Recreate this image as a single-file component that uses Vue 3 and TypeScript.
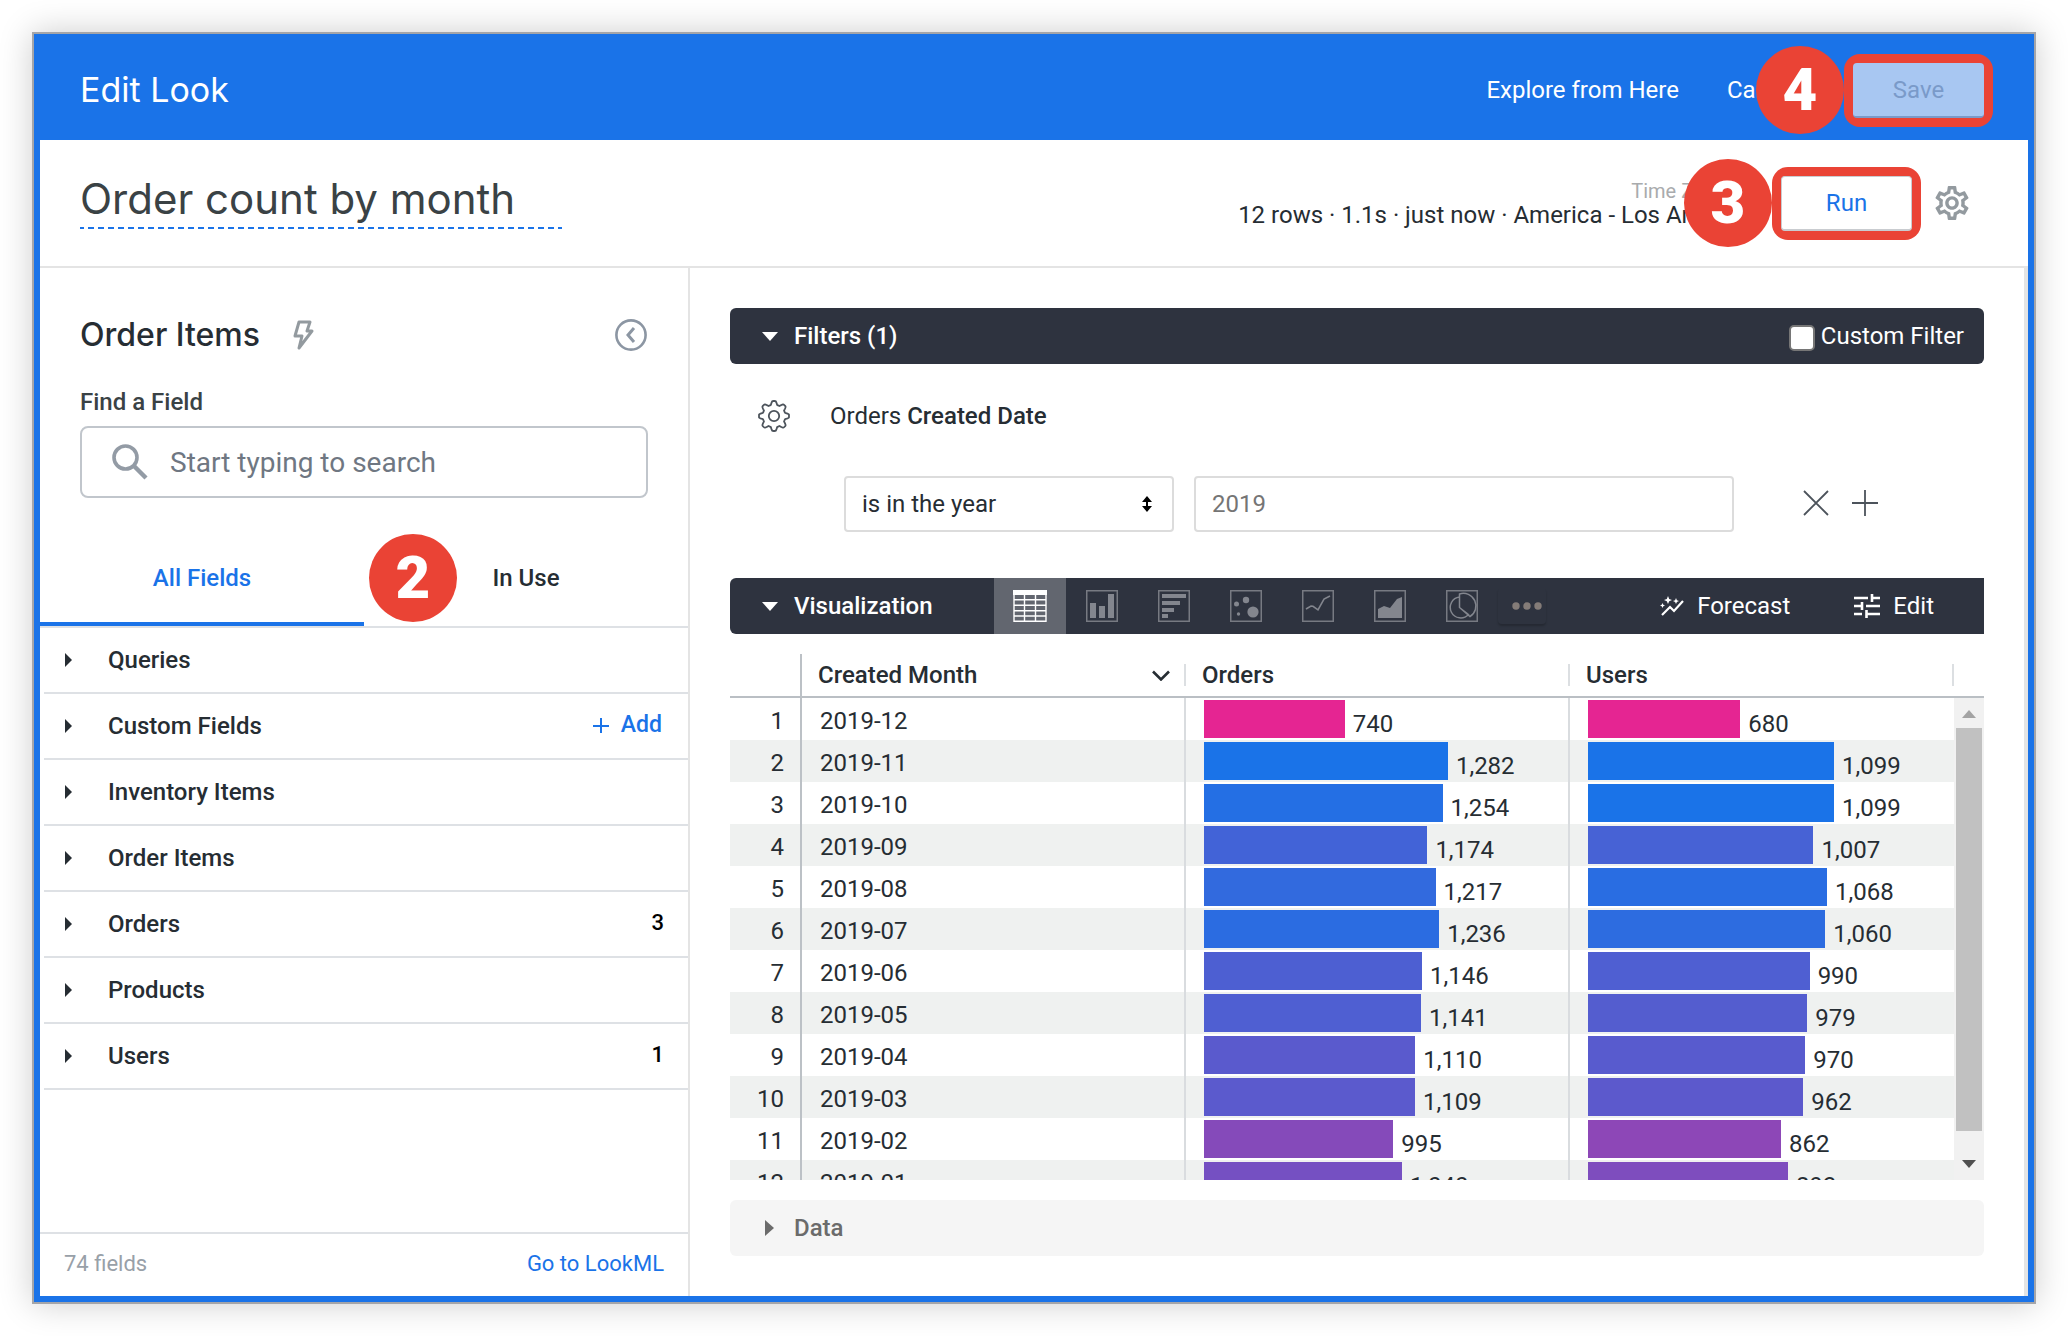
<script setup lang="ts">
import { ref } from 'vue'

interface FieldGroup {
  name: string
  count?: number
  addable?: boolean
}

interface ResultRow {
  month: string
  orders: number
  users: number
}

type Measure = 'orders' | 'users'

const lookTitle = ref('Order count by month')
const fieldSearch = ref('')
const operator = ref('year')
const filterValue = ref('')
const customFilter = ref(false)

const groups: FieldGroup[] = [
  { name: 'Queries' },
  { name: 'Custom Fields', addable: true },
  { name: 'Inventory Items' },
  { name: 'Order Items' },
  { name: 'Orders', count: 3 },
  { name: 'Products' },
  { name: 'Users', count: 1 },
]

const results: ResultRow[] = [
  { month: '2019-12', orders: 740, users: 680 },
  { month: '2019-11', orders: 1282, users: 1099 },
  { month: '2019-10', orders: 1254, users: 1099 },
  { month: '2019-09', orders: 1174, users: 1007 },
  { month: '2019-08', orders: 1217, users: 1068 },
  { month: '2019-07', orders: 1236, users: 1060 },
  { month: '2019-06', orders: 1146, users: 990 },
  { month: '2019-05', orders: 1141, users: 979 },
  { month: '2019-04', orders: 1110, users: 970 },
  { month: '2019-03', orders: 1109, users: 962 },
  { month: '2019-02', orders: 995, users: 862 },
  { month: '2019-01', orders: 1040, users: 893 },
]

const measures: Measure[] = ['orders', 'users']
const lowColor = [229, 37, 146]
const highColor = [26, 115, 232]
const fullBar: Record<Measure, number> = { orders: 70.5, users: 70.7 }

// Bars grow from zero; their colour runs from the column's minimum to its maximum.
function barStyle(row: ResultRow, key: Measure) {
  const values = results.map((r) => r[key])
  const min = Math.min(...values)
  const max = Math.max(...values)
  const t = (row[key] - min) / (max - min)
  const rgb = lowColor.map((c, i) => Math.round(c + (highColor[i] - c) * t))
  return {
    width: `${(row[key] / max) * fullBar[key]}%`,
    backgroundColor: `rgb(${rgb.join(', ')})`,
  }
}

function format(value: number): string {
  return value.toLocaleString('en-US')
}

// Outline of the eight-lobed cog beside a filter.
function cogPath(): string {
  const points: string[] = []
  for (let i = 0; i < 180; i++) {
    const a = (i / 180) * Math.PI * 2
    const wave = Math.max(-1, Math.min(1, Math.cos(a * 8) * 1.5))
    const r = 13.2 + wave * 1.8
    points.push(`${(16 + r * Math.sin(a)).toFixed(2)} ${(16 - r * Math.cos(a)).toFixed(2)}`)
  }
  return `M${points.join('L')}Z`
}
const cog = cogPath()
</script>

<template>
  <div class="window">
    <header class="topbar">
      <h1>Edit Look</h1>
      <nav class="actions" aria-label="Look actions">
        <a href="#explore">Explore from Here</a>
        <a href="#cancel">Cancel</a>
        <div class="callout">
          <span class="step step-before">4</span>
          <button class="btn btn-save" type="button" disabled>Save</button>
        </div>
      </nav>
    </header>

    <section class="titlebar">
      <input v-model="lookTitle" class="look-title" type="text" aria-label="Look title" />
      <div class="run">
        <div class="meta">
          <div class="zone">Time Zone</div>
          <div>12 rows · 1.1s · just now · America - Los Angeles</div>
        </div>
        <div class="callout">
          <span class="step step-before">3</span>
          <button class="btn btn-run" type="button">Run</button>
        </div>
        <button class="icon-btn" type="button" aria-label="Settings">
          <svg width="34" height="34" viewBox="2 2 20 20" fill="#939a9f">
            <path d="M19.43 12.98c.04-.32.07-.64.07-.98 0-.34-.03-.66-.07-.98l2.11-1.65c.19-.15.24-.42.12-.64l-2-3.46c-.09-.16-.26-.25-.44-.25-.06 0-.12.01-.17.03l-2.49 1c-.52-.4-1.08-.73-1.69-.98l-.38-2.65C14.46 2.18 14.25 2 14 2h-4c-.25 0-.46.18-.49.42l-.38 2.65c-.61.25-1.17.59-1.69.98l-2.49-1c-.06-.02-.12-.03-.18-.03-.17 0-.34.09-.43.25l-2 3.46c-.13.22-.07.49.12.64l2.11 1.65c-.04.32-.07.65-.07.98 0 .33.03.66.07.98l-2.11 1.65c-.19.15-.24.42-.12.64l2 3.46c.09.16.26.25.44.25.06 0 .12-.01.17-.03l2.49-1c.52.4 1.08.73 1.69.98l.38 2.65c.03.24.24.42.49.42h4c.25 0 .46-.18.49-.42l.38-2.65c.61-.25 1.17-.59 1.69-.98l2.49 1c.06.02.12.03.18.03.17 0 .34-.09.43-.25l2-3.46c.12-.22.07-.49-.12-.64l-2.11-1.65zm-1.98-1.71c.04.31.05.52.05.73 0 .21-.02.43-.05.73l-.14 1.13.89.7 1.08.84-.7 1.21-1.27-.51-1.04-.42-.9.68c-.43.32-.84.56-1.25.73l-1.06.43-.16 1.13-.2 1.35h-1.4l-.19-1.35-.16-1.13-1.06-.43c-.43-.18-.83-.41-1.23-.71l-.91-.7-1.06.43-1.27.51-.7-1.21 1.08-.84.89-.7-.14-1.13c-.03-.31-.05-.54-.05-.74s.02-.43.05-.73l.14-1.13-.89-.7-1.08-.84.7-1.21 1.27.51 1.04.42.9-.68c.43-.32.84-.56 1.25-.73l1.06-.43.16-1.13.2-1.35h1.39l.19 1.35.16 1.13 1.06.43c.43.18.83.41 1.23.71l.91.7 1.06-.43 1.27-.51.7 1.21-1.07.85-.89.7.14 1.13zM12 8c-2.21 0-4 1.79-4 4s1.79 4 4 4 4-1.79 4-4-1.79-4-4-4zm0 6c-1.1 0-2-.9-2-2s.9-2 2-2 2 .9 2 2-.9 2-2 2z" />
          </svg>
        </button>
      </div>
    </section>

    <div class="body">
      <aside class="sidebar">
        <div class="explore">
          <h2>Order Items</h2>
          <svg width="22" height="32" viewBox="0 0 22 32" fill="none" stroke="#939a9f" stroke-width="3" stroke-linejoin="round">
            <path d="M7 3h11l-3 9h5L7 29l3-12H3z" />
          </svg>
          <button class="icon-btn collapse" type="button" aria-label="Collapse field picker">
            <svg width="32" height="32" viewBox="0 0 32 32" fill="none" stroke="#8c96a3">
              <circle cx="16" cy="16" r="14.600" stroke-width="2.600" />
              <path d="M19 9l-6 7 6 7" stroke-width="3" />
            </svg>
          </button>
        </div>

        <div class="finder">
          <label for="field-search">Find a Field</label>
          <div class="search">
            <svg width="36" height="36" viewBox="0 0 36 36" fill="none" stroke="#939ba5">
              <circle cx="13.500" cy="13.500" r="11.500" stroke-width="3.600" />
              <path d="M22 22l12 12" stroke-width="4.400" />
            </svg>
            <input id="field-search" v-model="fieldSearch" type="text" placeholder="Start typing to search" />
          </div>
        </div>

        <div class="tabs" role="tablist">
          <button class="tab active" type="button" role="tab" aria-selected="true">All Fields</button>
          <button class="tab" type="button" role="tab" aria-selected="false">In Use</button>
          <span class="step step-tabs">2</span>
        </div>

        <ul class="groups">
          <li v-for="group in groups" :key="group.name">
            <button class="group" type="button" aria-expanded="false">
              <svg width="7" height="14" viewBox="0 0 7 14" fill="#262d33"><path d="M0 0l7 7-7 7z" /></svg>
              {{ group.name }}
            </button>
            <button v-if="group.addable" class="add" type="button">
              <svg width="16" height="16" viewBox="0 0 16 16" stroke="#1a73e8" stroke-width="2"><path d="M8 1v15M0 9h16" /></svg>
              Add
            </button>
            <span v-if="group.count" class="count">{{ group.count }}</span>
          </li>
        </ul>

        <footer class="side-foot">
          <span>74 fields</span>
          <a href="#lookml">Go to LookML</a>
        </footer>
      </aside>

      <main class="main">
        <div class="bar">
          <button class="bar-toggle" type="button" aria-expanded="true">
            <svg class="caret" width="16" height="9" viewBox="0 0 16 9" fill="#fff"><path d="M0 0h16L8 9z" /></svg>
            Filters (1)
          </button>
          <label class="custom"><input v-model="customFilter" type="checkbox" />Custom Filter</label>
        </div>

        <section class="filters">
          <div class="filter-name">
            <button class="icon-btn" type="button" aria-label="Filter settings">
              <svg width="32" height="32" viewBox="0 0 32 32" fill="none" stroke="#4c535b" stroke-width="1.800">
                <path :d="cog" />
                <circle cx="16" cy="16" r="5.200" />
              </svg>
            </button>
            <span>Orders <b>Created Date</b></span>
          </div>
          <div class="filter-row">
            <div class="select">
              <select v-model="operator" aria-label="Condition">
                <option value="year">is in the year</option>
              </select>
              <svg width="10" height="16" viewBox="0 0 10 16"><path d="M5 0l5 6H6v4h4l-5 6-5-6h4V6H0z" /></svg>
            </div>
            <input v-model="filterValue" class="value" type="text" placeholder="2019" aria-label="Year" />
            <div class="filter-tools">
              <button class="icon-btn" type="button" aria-label="Remove condition">
                <svg width="26" height="26" viewBox="0 0 26 26" stroke="#4c535b" stroke-width="1.800"><path d="M1 1l24 24M25 1L1 25" /></svg>
              </button>
              <button class="icon-btn" type="button" aria-label="Add condition">
                <svg width="26" height="26" viewBox="0 0 26 26" stroke="#4c535b" stroke-width="1.800"><path d="M13 0v26M0 13h26" /></svg>
              </button>
            </div>
          </div>
        </section>

        <div class="bar bar-viz">
          <button class="bar-toggle" type="button" aria-expanded="true">
            <svg class="caret" width="16" height="9" viewBox="0 0 16 9" fill="#fff"><path d="M0 0h16L8 9z" /></svg>
            Visualization
          </button>
          <div class="kinds">
            <button class="kind selected" type="button" aria-label="Table">
              <svg width="34" height="32" viewBox="0 0 34 32" fill="none" stroke="#fff" stroke-width="1.400">
                <path d="M0 0h34v5H0z" fill="#fff" stroke="none" />
                <path d="M1 4v27.300h32V4M1 9.800h32M1 15.200h32M1 20.800h32M1 26h32M11.500 4v27M22.500 4v27" />
              </svg>
            </button>
            <button class="kind" type="button" aria-label="Column">
              <svg width="32" height="32" viewBox="0 0 32 32" fill="#83868e">
                <rect class="frame" x=".75" y=".75" width="30.500" height="30.500" />
                <path d="M4 13h6v15H4zM13 16h6v12h-6zM22 4h6v24h-6z" />
              </svg>
            </button>
            <button class="kind" type="button" aria-label="Bar">
              <svg width="32" height="32" viewBox="0 0 32 32" fill="#83868e">
                <rect class="frame" x=".75" y=".75" width="30.500" height="30.500" />
                <path d="M4 4h24v4H4zM4 11h18v4H4zM4 18h12v4H4zM4 24h6v4H4z" />
              </svg>
            </button>
            <button class="kind" type="button" aria-label="Scatter">
              <svg width="32" height="32" viewBox="0 0 32 32" fill="#83868e">
                <rect class="frame" x=".75" y=".75" width="30.500" height="30.500" />
                <circle cx="6.500" cy="14" r="2.500" /><circle cx="16" cy="10" r="3.200" />
                <circle cx="8.500" cy="24" r="1.700" /><circle cx="23" cy="22" r="5.600" />
              </svg>
            </button>
            <button class="kind" type="button" aria-label="Line">
              <svg width="32" height="32" viewBox="0 0 32 32" fill="none">
                <rect class="frame" x=".75" y=".75" width="30.500" height="30.500" />
                <path d="M4 19l5-3 2 .3 5 3.500L22 9l6-3" stroke="#83868e" stroke-width="1.600" />
              </svg>
            </button>
            <button class="kind" type="button" aria-label="Area">
              <svg width="32" height="32" viewBox="0 0 32 32" fill="#83868e">
                <rect class="frame" x=".75" y=".75" width="30.500" height="30.500" />
                <path d="M4 28V19l6-3 6 2 7-9 5-2v21z" />
              </svg>
            </button>
            <button class="kind" type="button" aria-label="Pie">
              <svg width="32" height="32" viewBox="0 0 32 32" fill="none">
                <rect class="frame" x=".75" y=".75" width="30.500" height="30.500" />
                <path d="M13.500 7A10.500 10.500 0 1 0 22.500 24.500L13.500 17.500zM13.500 4v13.500L24 26.500A12.500 12.500 0 0 0 13.500 4z" stroke="#83868e" stroke-width="1.500" />
              </svg>
            </button>
            <button class="more" type="button" aria-label="More">
              <svg width="30" height="8" viewBox="0 0 30 8" fill="#847c78">
                <circle cx="4" cy="4" r="3.700" /><circle cx="15" cy="4" r="3.700" /><circle cx="26" cy="4" r="3.700" />
              </svg>
            </button>
          </div>
          <div class="viz-tools">
            <button class="tool" type="button">
              <svg width="24" height="20" viewBox="0 0 24 20" fill="#fff">
                <path d="M2 19l8-8 4 4L23 5" fill="none" stroke="#fff" stroke-width="2.200" />
                <path d="M8 0l1.200 3L12 4 9.200 5.200 8 8 6.800 5.200 4 4l2.800-1zM16 2l.9 2.200L19 5l-2.100.9L16 8l-.9-2.100L13 5l2.100-.8zM2.500 7l.8 1.800 1.700.7-1.700.7-.8 1.800-.8-1.800L0 9.500l1.700-.7z" />
              </svg>
              Forecast
            </button>
            <button class="tool" type="button">
              <svg width="26" height="24" viewBox="0 0 26 24" fill="none" stroke="#fff" stroke-width="2.600">
                <path d="M0 4h14M18 4h8M18 0v8M0 12h8M12 12h14M8 8v8M0 20h8M12 20h14M12.500 16v8" />
              </svg>
              Edit
            </button>
          </div>
        </div>

        <div class="results">
          <div class="viewport">
            <table>
              <thead>
                <tr>
                  <th class="num" aria-label="Row"></th>
                  <th>
                    <div class="head">
                      Created Month
                      <svg width="18" height="11" viewBox="0 0 18 11" fill="none" stroke="#262d33" stroke-width="2.600"><path d="M1 1.500l8 8 8-8" /></svg>
                    </div>
                  </th>
                  <th><div class="head">Orders</div></th>
                  <th><div class="head">Users</div></th>
                </tr>
              </thead>
              <tbody>
                <tr v-for="(row, index) in results" :key="row.month">
                  <td class="num">{{ index + 1 }}</td>
                  <td class="month">{{ row.month }}</td>
                  <td v-for="key in measures" :key="key">
                    <div class="cell">
                      <div class="fill" :style="barStyle(row, key)"></div>
                      <span>{{ format(row[key]) }}</span>
                    </div>
                  </td>
                </tr>
              </tbody>
            </table>
          </div>
          <div class="scroll">
            <div class="track">
              <svg width="14" height="8" viewBox="0 0 14 8" fill="#a3a3a3"><path d="M0 8l7-8 7 8z" /></svg>
              <div class="thumb"></div>
              <svg width="14" height="8" viewBox="0 0 14 8" fill="#505050"><path d="M0 0l7 8 7-8z" /></svg>
            </div>
          </div>
        </div>

        <div class="bar bar-data">
          <button class="bar-toggle" type="button" aria-expanded="false">
            <svg class="caret" width="9" height="16" viewBox="0 0 9 16" fill="#6b6b6b"><path d="M0 0l9 8-9 8z" /></svg>
            Data
          </button>
        </div>
      </main>
    </div>
  </div>
</template>

<style>
body {
  margin: 0;
  background: #fff;
}
</style>

<style scoped>
* {
  box-sizing: border-box;
}

.window {
  display: flex;
  flex-direction: column;
  height: calc(100vh - 64px);
  min-height: 1000px;
  margin: 32px;
  border: 2px solid #a4a5a9;
  outline: 6px solid #1a73e8;
  outline-offset: -8px;
  padding: 6px;
  background: #fff;
  box-shadow: 0 0 32px rgba(0, 0, 0, 0.2);
  color: #262d33;
  font: 24px/32px Roboto, sans-serif;
}

button,
input,
select {
  font: inherit;
  color: inherit;
}

button {
  display: flex;
  align-items: center;
  padding: 0;
  border: 0;
  background: none;
}

svg {
  flex: none;
  display: block;
}

a {
  color: #1a73e8;
  text-decoration: none;
}

h1,
h2 {
  margin: 0;
  font-family: Inter, sans-serif;
}

/* Header */
.topbar {
  display: flex;
  align-items: center;
  justify-content: space-between;
  flex: none;
  height: 100px;
  padding: 0 35px 0 40px;
  background: #1a73e8;
  color: #fff;
}

.topbar h1 {
  font-size: 34px;
  font-weight: 400;
  line-height: 44px;
}

.actions {
  display: flex;
  align-items: center;
  gap: 48px;
}

.actions a {
  color: #fff;
}

.actions .callout {
  margin-left: -4px;
}

.callout {
  position: relative;
  padding: 9px;
  border-radius: 16px;
  background: #ea4335;
}

.step {
  position: absolute;
  width: 88px;
  height: 88px;
  border-radius: 50%;
  background: #ea4335;
  color: #fff;
  font: 900 60px/88px Roboto, sans-serif;
  text-align: center;
}

.step-before {
  right: 100%;
  top: -8px;
}

.btn {
  justify-content: center;
  width: 131px;
  height: 55px;
  border-radius: 4px;
}

.btn-save {
  padding-top: 2px;
  background: #a8c7f2;
  border-bottom: 2px solid #7a9ac9;
  color: #7a9ac9;
}

.btn-run {
  background: #fff;
  border: 1px solid #c9ccd0;
  border-bottom-width: 2px;
  color: #1a73e8;
}

.titlebar {
  display: flex;
  align-items: center;
  justify-content: space-between;
  flex: none;
  height: 128px;
  padding: 0 59px 0 40px;
  border-bottom: 2px solid #e4e4e4;
}

.look-title {
  width: 482px;
  height: 56px;
  margin-bottom: 4px;
  padding: 0 0 6px;
  border: 0;
  background: repeating-linear-gradient(90deg, #1a73e8 0 4px, #fff 4px 8px, #1a73e8 8px 10px) bottom / 100% 2px no-repeat;
  color: #3a4245;
  font: 42px/48px Inter, sans-serif;
}

.run {
  display: flex;
  align-items: center;
}

.meta {
  margin-right: 20px;
  text-align: right;
  line-height: 24px;
}

.zone {
  color: #a9abad;
  font-size: 20px;
  padding-right: 26px;
}

.run .icon-btn {
  margin-left: 14px;
}

/* Field picker */
.body {
  display: flex;
  flex: 1;
  min-height: 0;
}

.sidebar {
  display: flex;
  flex-direction: column;
  flex: 0 1 650px;
  border-right: 2px solid #e4e4e4;
}

.explore {
  display: flex;
  align-items: center;
  height: 48px;
  margin: 43px 41px 0 40px;
}

.explore h2 {
  margin-right: 32px;
  font-size: 32px;
  font-weight: 500;
}

.collapse {
  margin-left: auto;
}

.finder {
  padding: 27px 40px 32px;
}

.finder label {
  display: block;
  margin-bottom: 8px;
  color: #3a4245;
  font-weight: 500;
}

.search {
  display: flex;
  align-items: center;
  height: 72px;
  padding: 0 30px;
  border: 2px solid #c1c6cc;
  border-radius: 8px;
}

.search input {
  flex: 1;
  min-width: 0;
  margin-left: 22px;
  padding: 2px 0 0;
  border: 0;
  font-size: 28px;
}

.search input::placeholder {
  color: #6f7782;
  opacity: 1;
}

.tabs {
  position: relative;
  display: flex;
  flex: none;
  height: 98px;
  border-bottom: 2px solid #dee1e5;
}

.tab {
  justify-content: center;
  flex: 1;
  border-top: 4px solid transparent;
  border-bottom: 4px solid transparent;
  font-weight: 500;
}

.tab.active {
  border-bottom-color: #1a73e8;
  color: #1a73e8;
}

.step-tabs {
  left: 50%;
  top: 50%;
  margin: -44px 0 0 5px;
}

.groups {
  flex: 1;
  margin: 0 0 0 4px;
  padding: 0;
  list-style: none;
}

.groups li {
  display: flex;
  align-items: center;
  justify-content: space-between;
  height: 66px;
  padding: 0 24px 0 21px;
  border-bottom: 2px solid #dee1e5;
}

.group {
  gap: 36px;
  font-weight: 500;
}

.add {
  gap: 12px;
  margin-right: 2px;
  padding-bottom: 2px;
  color: #1a73e8;
  font-size: 23px;
  font-weight: 500;
}

.count {
  padding-bottom: 2px;
  color: #000;
  font-size: 22px;
  font-weight: 500;
}

.side-foot {
  display: flex;
  align-items: center;
  justify-content: space-between;
  flex: none;
  height: 64px;
  padding: 0 24px 2px;
  border-top: 2px solid #dee1e5;
  color: #98a0a8;
  font-size: 22px;
}

/* Look contents */
.main {
  display: flex;
  flex-direction: column;
  flex: 1;
  min-width: 0;
  padding: 40px;
  border-right: 4px solid #e4e4e4;
}

.bar {
  display: flex;
  align-items: center;
  flex: none;
  height: 56px;
  padding: 0 20px 0 32px;
  border-radius: 6px;
  background: #2e333f;
  color: #fff;
}

.bar-toggle {
  font-weight: 500;
}

.caret {
  box-sizing: content-box;
  margin-right: 16px;
}

.custom {
  display: flex;
  align-items: center;
  margin-left: auto;
}

.custom input {
  appearance: none;
  width: 26px;
  height: 26px;
  margin: 4px 6px 0 0;
  border: 2px solid #767676;
  border-radius: 5px;
  background: #fff;
}

.filters {
  padding: 36px 0 46px 28px;
}

.filter-name {
  display: flex;
  align-items: center;
  gap: 40px;
}

.filter-name b {
  font-weight: 500;
}

.filter-row {
  display: flex;
  align-items: center;
  margin: 44px 0 0 86px;
}

.select {
  position: relative;
  flex: 0 1 330px;
}

.select select,
.value {
  width: 100%;
  height: 56px;
  padding: 0 16px;
  border: 2px solid #dcdcdc;
  border-radius: 4px;
  background: #fff;
}

.select select {
  appearance: none;
}

.select svg {
  position: absolute;
  right: 22px;
  top: 20px;
}

.value {
  flex: 0 1 540px;
  min-width: 0;
  margin-left: 20px;
}

.value::placeholder {
  color: #757575;
  opacity: 1;
}

.filter-tools {
  display: flex;
  gap: 23px;
  margin-left: 69px;
  padding-bottom: 2px;
}

.bar-viz {
  padding-right: 50px;
  border-radius: 6px 0 0 6px;
}

.kinds {
  display: flex;
  align-self: stretch;
  margin-left: 61px;
}

.kind {
  justify-content: center;
  width: 72px;
}

.kind.selected {
  background: #62666f;
}

.frame {
  fill: none;
  stroke: #777a82;
  stroke-width: 1.5px;
}

.more {
  justify-content: flex-end;
  align-self: center;
  width: 48px;
  height: 36px;
  padding-right: 4px;
  border-radius: 4px;
  box-shadow: 0 2px 2px rgba(0, 0, 0, 0.2);
}

.viz-tools {
  display: flex;
  gap: 64px;
  margin-left: auto;
}

.tool {
  gap: 13px;
}

.results {
  display: flex;
  flex: 1;
  min-height: 0;
  margin: 20px 0;
}

.viewport {
  flex: 1;
  min-width: 0;
  overflow: hidden;
}

table {
  width: 100%;
  border-spacing: 0;
  table-layout: fixed;
}

th {
  height: 44px;
  padding: 0;
  border-bottom: 2px solid #babfc4;
  font-weight: 500;
  text-align: left;
}

td {
  height: 42px;
  padding: 0;
  border-right: 2px solid #d9dcdf;
}

td:last-child {
  border-right: 0;
}

tbody tr:nth-child(even) {
  background: #eff1f0;
}

th.num,
td.num {
  width: 72px;
  padding: 3px 16px 0 0;
  border-right: 2px solid #bcc1c6;
  text-align: right;
}

.head {
  display: flex;
  align-items: center;
  justify-content: space-between;
  height: 22px;
  padding: 0 14px 0 16px;
  border-right: 2px solid #dcdfe2;
}

td.month {
  padding: 3px 0 0 18px;
}

.cell {
  display: flex;
  align-items: center;
  height: 42px;
  padding: 0 18px;
}

.fill {
  flex: none;
  height: 38px;
}

.cell span {
  padding: 10px 0 0 8px;
}

.scroll {
  display: flex;
  flex-direction: column;
  width: 30px;
  padding-top: 42px;
}

.track {
  display: flex;
  flex-direction: column;
  align-items: center;
  flex: 1;
  padding: 12px 0;
  border-top: 2px solid #babfc4;
  background: #f1f1f1;
}

.thumb {
  flex: none;
  width: 26px;
  height: 88%;
  margin: 10px 0 auto;
  background: #c1c1c1;
}

.bar-data {
  background: #f5f5f5;
  color: #6b6b6b;
}

.bar-data .caret {
  margin: 0 20px 0 3px;
}
</style>
